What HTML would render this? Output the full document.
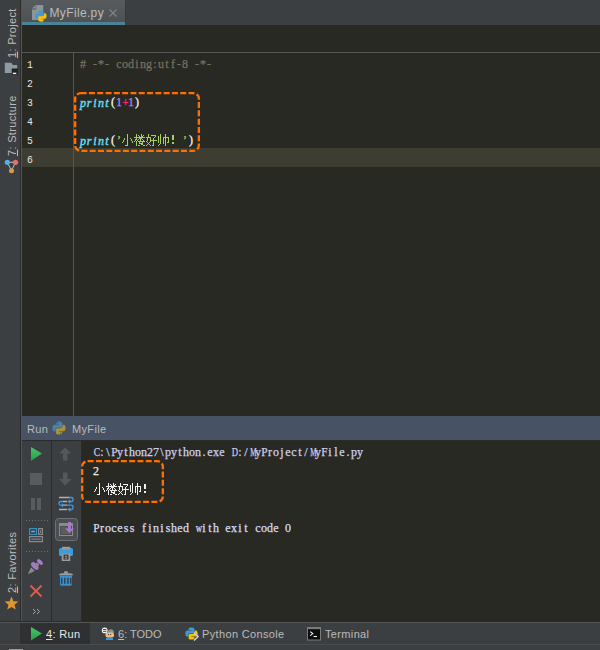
<!DOCTYPE html>
<html><head><meta charset="utf-8">
<style>
*{margin:0;padding:0;box-sizing:border-box}
html,body{width:600px;height:650px;overflow:hidden;background:#3c3f41}
body{position:relative;font-family:"Liberation Sans",sans-serif;}
.a{position:absolute}
.m{position:absolute;font-family:"Liberation Serif",serif;font-size:12px;white-space:pre;line-height:19px;-webkit-text-stroke-width:.25px}
.c{display:inline-block;width:6px;text-align:center;font-weight:inherit;height:19px;vertical-align:top}
.ln{position:absolute;font-family:"Liberation Mono",monospace;font-size:11.5px;white-space:pre;line-height:19px;color:#e8e8e2}
.ui{position:absolute;font-family:"Liberation Sans",sans-serif;font-size:11px;letter-spacing:.35px;white-space:pre;line-height:14px;color:#bbbbbb}
.vt{position:absolute;transform-origin:0 0;transform:rotate(-90deg);font-size:11px;letter-spacing:.32px;color:#bbbbbb;white-space:pre;line-height:14px}
u{text-decoration:underline;text-underline-offset:1px}
</style></head><body>

<div class="a" style="left:20px;top:0;width:1px;height:621px;background:#2b2b2b"></div>
<div class="a" style="left:21px;top:0;width:1px;height:621px;background:#555555"></div>
<div class="a" style="left:22px;top:0;width:103px;height:22px;background:linear-gradient(#575b5e,#4e5254)"></div>
<div class="a" style="left:125px;top:0;width:1px;height:25px;background:#37393b"></div>
<div class="a" style="left:22px;top:22px;width:103px;height:3px;background:#4a8396"></div>
<div class="a" style="left:22px;top:25px;width:578px;height:391px;background:#282923"></div>
<div class="a" style="left:22px;top:52px;width:578px;height:1px;background:#555555"></div>
<div class="a" style="left:22px;top:148px;width:578px;height:19px;background:#3e3d32"></div>
<div class="a" style="left:73px;top:53px;width:1px;height:363px;background:#555555"></div>
<div class="a" style="left:22px;top:416px;width:578px;height:24px;background:#475264"></div>
<div class="a" style="left:22px;top:440px;width:578px;height:1px;background:#2b2b2b"></div>
<div class="a" style="left:51px;top:441px;width:1px;height:180px;background:#2b2b2b"></div>
<div class="a" style="left:81px;top:441px;width:1px;height:180px;background:#2b2b2b"></div>
<div class="a" style="left:82px;top:441px;width:518px;height:180px;background:#282923"></div>
<div class="a" style="left:0;top:621px;width:600px;height:1px;background:#2b2b2b"></div>
<div class="a" style="left:0;top:622px;width:600px;height:1px;background:#555555"></div>
<div class="a" style="left:20px;top:623px;width:70px;height:21px;background:#2e3032"></div>
<div class="a" style="left:0;top:644px;width:600px;height:1px;background:#4a4a4a"></div>

<div class="ln" style="left:26.8px;top:55px;transform:scaleX(.85);transform-origin:0 0">1
2
3
4
5
6</div>
<div class="m" style="left:80px;top:55px"><span style="color:#75715e"><b class="c">#</b><b class="c"></b><b class="c">-</b><b class="c">*</b><b class="c">-</b><b class="c"></b><b class="c">c</b><b class="c">o</b><b class="c">d</b><b class="c">i</b><b class="c">n</b><b class="c">g</b><b class="c">:</b><b class="c">u</b><b class="c">t</b><b class="c">f</b><b class="c">-</b><b class="c">8</b><b class="c"></b><b class="c">-</b><b class="c">*</b><b class="c">-</b></span><br><br><span style="color:#66d9ef;font-style:italic;font-weight:normal;-webkit-text-stroke-width:.45px;position:relative;top:1px"><b class="c">p</b><b class="c">r</b><b class="c">i</b><b class="c">n</b><b class="c">t</b></span><span style="color:#f8f8f2"><b class="c">(</b></span><span style="color:#ae81ff"><b class="c">1</b></span><span style="color:#f92672;font-weight:bold"><b class="c" style="transform:scaleX(0.93)">+</b></span><span style="color:#ae81ff"><b class="c">1</b></span><span style="color:#f8f8f2"><b class="c">)</b></span><br><br><span style="color:#66d9ef;font-style:italic;font-weight:normal;-webkit-text-stroke-width:.45px;position:relative;top:1px"><b class="c">p</b><b class="c">r</b><b class="c">i</b><b class="c">n</b><b class="c">t</b></span><span style="color:#f8f8f2"><b class="c">(</b></span><span style="color:#a6d05e"><b class="c">’</b></span><b class="c"></b><b class="c"></b><b class="c"></b><b class="c"></b><b class="c"></b><b class="c"></b><b class="c"></b><b class="c"></b><b class="c"></b><b class="c"></b><span style="color:#a6d05e"><b class="c">’</b></span><span style="color:#f8f8f2"><b class="c">)</b></span></div>
<svg class="a" style="left:121px;top:134px" width="60" height="12" fill="#a6d05e" shape-rendering="crispEdges"><rect x="6" y="0" width="1" height="1"/><rect x="6" y="1" width="1" height="1"/><rect x="6" y="2" width="1" height="1"/><rect x="6" y="3" width="1" height="1"/><rect x="3" y="4" width="1" height="1"/><rect x="6" y="4" width="1" height="1"/><rect x="9" y="4" width="1" height="1"/><rect x="3" y="5" width="1" height="1"/><rect x="6" y="5" width="1" height="1"/><rect x="10" y="5" width="1" height="1"/><rect x="2" y="6" width="1" height="1"/><rect x="6" y="6" width="1" height="1"/><rect x="10" y="6" width="1" height="1"/><rect x="2" y="7" width="1" height="1"/><rect x="6" y="7" width="1" height="1"/><rect x="11" y="7" width="1" height="1"/><rect x="1" y="8" width="1" height="1"/><rect x="6" y="8" width="1" height="1"/><rect x="11" y="8" width="1" height="1"/><rect x="6" y="9" width="1" height="1"/><rect x="6" y="10" width="1" height="1"/><rect x="4" y="11" width="3" height="1"/><rect x="15" y="0" width="1" height="1"/><rect x="20" y="0" width="1" height="1"/><rect x="15" y="1" width="1" height="1"/><rect x="17" y="1" width="1" height="1"/><rect x="20" y="1" width="1" height="1"/><rect x="22" y="1" width="1" height="1"/><rect x="15" y="2" width="1" height="1"/><rect x="18" y="2" width="1" height="1"/><rect x="20" y="2" width="2" height="1"/><rect x="13" y="3" width="11" height="1"/><rect x="15" y="4" width="1" height="1"/><rect x="18" y="4" width="3" height="1"/><rect x="14" y="5" width="2" height="1"/><rect x="17" y="5" width="1" height="1"/><rect x="19" y="5" width="1" height="1"/><rect x="21" y="5" width="1" height="1"/><rect x="14" y="6" width="1" height="1"/><rect x="16" y="6" width="1" height="1"/><rect x="19" y="6" width="1" height="1"/><rect x="22" y="6" width="1" height="1"/><rect x="13" y="7" width="1" height="1"/><rect x="15" y="7" width="1" height="1"/><rect x="17" y="7" width="7" height="1"/><rect x="15" y="8" width="1" height="1"/><rect x="18" y="8" width="1" height="1"/><rect x="21" y="8" width="1" height="1"/><rect x="15" y="9" width="1" height="1"/><rect x="18" y="9" width="4" height="1"/><rect x="15" y="10" width="1" height="1"/><rect x="20" y="10" width="2" height="1"/><rect x="15" y="11" width="1" height="1"/><rect x="17" y="11" width="2" height="1"/><rect x="22" y="11" width="2" height="1"/><rect x="27" y="0" width="1" height="1"/><rect x="27" y="1" width="1" height="1"/><rect x="30" y="1" width="5" height="1"/><rect x="27" y="2" width="1" height="1"/><rect x="34" y="2" width="1" height="1"/><rect x="25" y="3" width="5" height="1"/><rect x="33" y="3" width="1" height="1"/><rect x="26" y="4" width="1" height="1"/><rect x="29" y="4" width="1" height="1"/><rect x="32" y="4" width="1" height="1"/><rect x="26" y="5" width="1" height="1"/><rect x="29" y="5" width="1" height="1"/><rect x="32" y="5" width="1" height="1"/><rect x="26" y="6" width="1" height="1"/><rect x="29" y="6" width="7" height="1"/><rect x="25" y="7" width="1" height="1"/><rect x="29" y="7" width="1" height="1"/><rect x="32" y="7" width="1" height="1"/><rect x="26" y="8" width="1" height="1"/><rect x="28" y="8" width="1" height="1"/><rect x="32" y="8" width="1" height="1"/><rect x="27" y="9" width="1" height="1"/><rect x="32" y="9" width="1" height="1"/><rect x="26" y="10" width="1" height="1"/><rect x="28" y="10" width="1" height="1"/><rect x="32" y="10" width="1" height="1"/><rect x="25" y="11" width="1" height="1"/><rect x="29" y="11" width="1" height="1"/><rect x="31" y="11" width="2" height="1"/><rect x="39" y="0" width="1" height="1"/><rect x="44" y="0" width="1" height="1"/><rect x="39" y="1" width="1" height="1"/><rect x="44" y="1" width="1" height="1"/><rect x="37" y="2" width="1" height="1"/><rect x="39" y="2" width="1" height="1"/><rect x="44" y="2" width="1" height="1"/><rect x="37" y="3" width="1" height="1"/><rect x="39" y="3" width="1" height="1"/><rect x="42" y="3" width="6" height="1"/><rect x="37" y="4" width="1" height="1"/><rect x="39" y="4" width="1" height="1"/><rect x="42" y="4" width="1" height="1"/><rect x="44" y="4" width="1" height="1"/><rect x="47" y="4" width="1" height="1"/><rect x="37" y="5" width="1" height="1"/><rect x="39" y="5" width="1" height="1"/><rect x="42" y="5" width="1" height="1"/><rect x="44" y="5" width="1" height="1"/><rect x="47" y="5" width="1" height="1"/><rect x="37" y="6" width="1" height="1"/><rect x="39" y="6" width="1" height="1"/><rect x="42" y="6" width="1" height="1"/><rect x="44" y="6" width="1" height="1"/><rect x="47" y="6" width="1" height="1"/><rect x="37" y="7" width="1" height="1"/><rect x="39" y="7" width="1" height="1"/><rect x="42" y="7" width="1" height="1"/><rect x="44" y="7" width="1" height="1"/><rect x="47" y="7" width="1" height="1"/><rect x="37" y="8" width="1" height="1"/><rect x="39" y="8" width="1" height="1"/><rect x="42" y="8" width="1" height="1"/><rect x="44" y="8" width="1" height="1"/><rect x="46" y="8" width="2" height="1"/><rect x="39" y="9" width="1" height="1"/><rect x="42" y="9" width="1" height="1"/><rect x="44" y="9" width="1" height="1"/><rect x="38" y="10" width="1" height="1"/><rect x="44" y="10" width="1" height="1"/><rect x="37" y="11" width="1" height="1"/><rect x="44" y="11" width="1" height="1"/><rect x="51" y="1" width="2" height="1"/><rect x="51" y="2" width="2" height="1"/><rect x="51" y="3" width="2" height="1"/><rect x="51" y="4" width="2" height="1"/><rect x="51" y="5" width="2" height="1"/><rect x="51" y="8" width="2" height="1"/><rect x="51" y="9" width="2" height="1"/></svg>
<svg class="a" style="left:71px;top:89px" width="132" height="66"><rect x="4.15" y="4.15" width="123.7" height="57.7" rx="5.5" ry="5.5" fill="none" stroke="#ff7000" stroke-width="2.3" stroke-dasharray="6 2.3"/></svg>
<div class="m" style="left:93px;top:443px"><span style="color:#d0d0e8"><b class="c" style="transform:scaleX(0.79)">C</b><b class="c">:</b><b class="c">\</b><b class="c" style="transform:scaleX(0.94)">P</b><b class="c">y</b><b class="c">t</b><b class="c">h</b><b class="c">o</b><b class="c">n</b><b class="c">2</b><b class="c">7</b><b class="c">\</b><b class="c">p</b><b class="c">y</b><b class="c">t</b><b class="c">h</b><b class="c">o</b><b class="c">n</b><b class="c">.</b><b class="c">e</b><b class="c">x</b><b class="c">e</b><b class="c"></b><b class="c" style="transform:scaleX(0.73)">D</b><b class="c">:</b><b class="c">/</b><b class="c" style="transform:scaleX(0.59)">M</b><b class="c">y</b><b class="c" style="transform:scaleX(0.94)">P</b><b class="c">r</b><b class="c">o</b><b class="c">j</b><b class="c">e</b><b class="c">c</b><b class="c">t</b><b class="c">/</b><b class="c" style="transform:scaleX(0.59)">M</b><b class="c">y</b><b class="c" style="transform:scaleX(0.94)">F</b><b class="c">i</b><b class="c">l</b><b class="c">e</b><b class="c">.</b><b class="c">p</b><b class="c">y</b></span><br><span style="color:#e8e8e8"><b class="c">2</b></span><br><br><br><span style="color:#dcdcf0"><b class="c" style="transform:scaleX(0.94)">P</b><b class="c">r</b><b class="c">o</b><b class="c">c</b><b class="c">e</b><b class="c">s</b><b class="c">s</b><b class="c"></b><b class="c">f</b><b class="c">i</b><b class="c">n</b><b class="c">i</b><b class="c">s</b><b class="c">h</b><b class="c">e</b><b class="c">d</b><b class="c"></b><b class="c" style="transform:scaleX(0.73)">w</b><b class="c">i</b><b class="c">t</b><b class="c">h</b><b class="c"></b><b class="c">e</b><b class="c">x</b><b class="c">i</b><b class="c">t</b><b class="c"></b><b class="c">c</b><b class="c">o</b><b class="c">d</b><b class="c">e</b><b class="c"></b><b class="c">0</b></span></div>
<svg class="a" style="left:93px;top:483px" width="60" height="12" fill="#f0f0f0" shape-rendering="crispEdges"><rect x="6" y="0" width="1" height="1"/><rect x="6" y="1" width="1" height="1"/><rect x="6" y="2" width="1" height="1"/><rect x="6" y="3" width="1" height="1"/><rect x="3" y="4" width="1" height="1"/><rect x="6" y="4" width="1" height="1"/><rect x="9" y="4" width="1" height="1"/><rect x="3" y="5" width="1" height="1"/><rect x="6" y="5" width="1" height="1"/><rect x="10" y="5" width="1" height="1"/><rect x="2" y="6" width="1" height="1"/><rect x="6" y="6" width="1" height="1"/><rect x="10" y="6" width="1" height="1"/><rect x="2" y="7" width="1" height="1"/><rect x="6" y="7" width="1" height="1"/><rect x="11" y="7" width="1" height="1"/><rect x="1" y="8" width="1" height="1"/><rect x="6" y="8" width="1" height="1"/><rect x="11" y="8" width="1" height="1"/><rect x="6" y="9" width="1" height="1"/><rect x="6" y="10" width="1" height="1"/><rect x="4" y="11" width="3" height="1"/><rect x="15" y="0" width="1" height="1"/><rect x="20" y="0" width="1" height="1"/><rect x="15" y="1" width="1" height="1"/><rect x="17" y="1" width="1" height="1"/><rect x="20" y="1" width="1" height="1"/><rect x="22" y="1" width="1" height="1"/><rect x="15" y="2" width="1" height="1"/><rect x="18" y="2" width="1" height="1"/><rect x="20" y="2" width="2" height="1"/><rect x="13" y="3" width="11" height="1"/><rect x="15" y="4" width="1" height="1"/><rect x="18" y="4" width="3" height="1"/><rect x="14" y="5" width="2" height="1"/><rect x="17" y="5" width="1" height="1"/><rect x="19" y="5" width="1" height="1"/><rect x="21" y="5" width="1" height="1"/><rect x="14" y="6" width="1" height="1"/><rect x="16" y="6" width="1" height="1"/><rect x="19" y="6" width="1" height="1"/><rect x="22" y="6" width="1" height="1"/><rect x="13" y="7" width="1" height="1"/><rect x="15" y="7" width="1" height="1"/><rect x="17" y="7" width="7" height="1"/><rect x="15" y="8" width="1" height="1"/><rect x="18" y="8" width="1" height="1"/><rect x="21" y="8" width="1" height="1"/><rect x="15" y="9" width="1" height="1"/><rect x="18" y="9" width="4" height="1"/><rect x="15" y="10" width="1" height="1"/><rect x="20" y="10" width="2" height="1"/><rect x="15" y="11" width="1" height="1"/><rect x="17" y="11" width="2" height="1"/><rect x="22" y="11" width="2" height="1"/><rect x="27" y="0" width="1" height="1"/><rect x="27" y="1" width="1" height="1"/><rect x="30" y="1" width="5" height="1"/><rect x="27" y="2" width="1" height="1"/><rect x="34" y="2" width="1" height="1"/><rect x="25" y="3" width="5" height="1"/><rect x="33" y="3" width="1" height="1"/><rect x="26" y="4" width="1" height="1"/><rect x="29" y="4" width="1" height="1"/><rect x="32" y="4" width="1" height="1"/><rect x="26" y="5" width="1" height="1"/><rect x="29" y="5" width="1" height="1"/><rect x="32" y="5" width="1" height="1"/><rect x="26" y="6" width="1" height="1"/><rect x="29" y="6" width="7" height="1"/><rect x="25" y="7" width="1" height="1"/><rect x="29" y="7" width="1" height="1"/><rect x="32" y="7" width="1" height="1"/><rect x="26" y="8" width="1" height="1"/><rect x="28" y="8" width="1" height="1"/><rect x="32" y="8" width="1" height="1"/><rect x="27" y="9" width="1" height="1"/><rect x="32" y="9" width="1" height="1"/><rect x="26" y="10" width="1" height="1"/><rect x="28" y="10" width="1" height="1"/><rect x="32" y="10" width="1" height="1"/><rect x="25" y="11" width="1" height="1"/><rect x="29" y="11" width="1" height="1"/><rect x="31" y="11" width="2" height="1"/><rect x="39" y="0" width="1" height="1"/><rect x="44" y="0" width="1" height="1"/><rect x="39" y="1" width="1" height="1"/><rect x="44" y="1" width="1" height="1"/><rect x="37" y="2" width="1" height="1"/><rect x="39" y="2" width="1" height="1"/><rect x="44" y="2" width="1" height="1"/><rect x="37" y="3" width="1" height="1"/><rect x="39" y="3" width="1" height="1"/><rect x="42" y="3" width="6" height="1"/><rect x="37" y="4" width="1" height="1"/><rect x="39" y="4" width="1" height="1"/><rect x="42" y="4" width="1" height="1"/><rect x="44" y="4" width="1" height="1"/><rect x="47" y="4" width="1" height="1"/><rect x="37" y="5" width="1" height="1"/><rect x="39" y="5" width="1" height="1"/><rect x="42" y="5" width="1" height="1"/><rect x="44" y="5" width="1" height="1"/><rect x="47" y="5" width="1" height="1"/><rect x="37" y="6" width="1" height="1"/><rect x="39" y="6" width="1" height="1"/><rect x="42" y="6" width="1" height="1"/><rect x="44" y="6" width="1" height="1"/><rect x="47" y="6" width="1" height="1"/><rect x="37" y="7" width="1" height="1"/><rect x="39" y="7" width="1" height="1"/><rect x="42" y="7" width="1" height="1"/><rect x="44" y="7" width="1" height="1"/><rect x="47" y="7" width="1" height="1"/><rect x="37" y="8" width="1" height="1"/><rect x="39" y="8" width="1" height="1"/><rect x="42" y="8" width="1" height="1"/><rect x="44" y="8" width="1" height="1"/><rect x="46" y="8" width="2" height="1"/><rect x="39" y="9" width="1" height="1"/><rect x="42" y="9" width="1" height="1"/><rect x="44" y="9" width="1" height="1"/><rect x="38" y="10" width="1" height="1"/><rect x="44" y="10" width="1" height="1"/><rect x="37" y="11" width="1" height="1"/><rect x="44" y="11" width="1" height="1"/><rect x="51" y="1" width="2" height="1"/><rect x="51" y="2" width="2" height="1"/><rect x="51" y="3" width="2" height="1"/><rect x="51" y="4" width="2" height="1"/><rect x="51" y="5" width="2" height="1"/><rect x="51" y="8" width="2" height="1"/><rect x="51" y="9" width="2" height="1"/></svg>
<svg class="a" style="left:78px;top:457px" width="89" height="49"><rect x="4.15" y="4.15" width="80.7" height="40.7" rx="5.5" ry="5.5" fill="none" stroke="#ff7000" stroke-width="2.3" stroke-dasharray="6 2.3"/></svg>
<div class="vt" style="left:5px;top:58px"><u>1</u>: Project</div>
<div class="vt" style="left:5px;top:156px"><u>7</u>: Structure</div>
<div class="vt" style="left:5px;top:593px"><u>2</u>: Favorites</div>
<svg class="a" style="left:4px;top:62px" width="16" height="16"><path d="M0.8,0.8 H7.3 L8.8,3 H13.2 V11 H0.8 Z" fill="#8c9aa2"/><rect x="7.7" y="6.5" width="6.2" height="6.2" fill="#222222"/><rect x="8.8" y="10.7" width="3.5" height="1.4" fill="#f0f0f0"/></svg>
<svg class="a" style="left:2px;top:156px" width="20" height="20"><path d="M5.3,6.3 H13.5 M5.3,6.3 L9.5,14.7 L13.5,6.3" stroke="#c0c0c0" stroke-width="1" fill="none"/><circle cx="5.3" cy="6.3" r="2.6" fill="#58ace6"/><circle cx="13.5" cy="6.3" r="2.6" fill="#e6706a"/><circle cx="9.5" cy="14.7" r="2.5" fill="#d8994a"/></svg>
<svg class="a" style="left:4px;top:596px" width="15" height="15" viewBox="0 0 15 15"><path d="M7.5,0.5 L9.4,5.2 L14.4,5.5 L10.5,8.7 L11.8,13.6 L7.5,10.9 L3.2,13.6 L4.5,8.7 L0.6,5.5 L5.6,5.2 Z" fill="#de962f"/></svg>
<svg class="a" style="left:31px;top:4px" width="14" height="18"><path d="M5.2,1 H12.2 V16 H1 V5.4 H5.2 Z" fill="#8c959b"/><path d="M1,4.6 L4.6,1 V4.6 Z" fill="#8c959b"/></svg>
<svg class="a" style="left:35px;top:10px" width="12" height="12" viewBox="0 0 16 16"><path d="M7.9,0.5 C4.2,0.5 4.5,2.1 4.5,2.1 V3.8 H8 V4.3 H3 C3,4.3 0.5,4 0.5,8 C0.5,11.9 2.6,11.8 2.6,11.8 H4 V9.9 C4,9.9 3.9,7.8 6.1,7.8 H9.6 C9.6,7.8 11.6,7.8 11.6,5.9 V2.6 C11.6,2.6 11.9,0.5 7.9,0.5 Z" fill="#3c9ad6"/><path d="M8.1,15.5 C11.8,15.5 11.5,13.9 11.5,13.9 V12.2 H8 V11.7 H13 C13,11.7 15.5,12 15.5,8 C15.5,4.1 13.4,4.2 13.4,4.2 H12 V6.1 C12,6.1 12.1,8.2 9.9,8.2 H6.4 C6.4,8.2 4.4,8.2 4.4,10.1 V13.4 C4.4,13.4 4.1,15.5 8.1,15.5 Z" fill="#f5c400"/></svg>
<div class="ui" style="left:49.5px;top:6px;font-size:12px;letter-spacing:.35px;line-height:14px;color:#bbbbbb">MyFile.py</div>
<svg class="a" style="left:109px;top:9px" width="8" height="8"><path d="M0.5,0.5 L7.5,7.5 M7.5,0.5 L0.5,7.5" stroke="#80858a" stroke-width="1.1"/></svg>
<div class="ui" style="left:27px;top:422px;;color:#bbbbbb">Run</div>
<svg class="a" style="left:52px;top:421px" width="14" height="14" viewBox="0 0 16 16"><path d="M7.9,0.5 C4.2,0.5 4.5,2.1 4.5,2.1 V3.8 H8 V4.3 H3 C3,4.3 0.5,4 0.5,8 C0.5,11.9 2.6,11.8 2.6,11.8 H4 V9.9 C4,9.9 3.9,7.8 6.1,7.8 H9.6 C9.6,7.8 11.6,7.8 11.6,5.9 V2.6 C11.6,2.6 11.9,0.5 7.9,0.5 Z" fill="#4a82a8"/><path d="M8.1,15.5 C11.8,15.5 11.5,13.9 11.5,13.9 V12.2 H8 V11.7 H13 C13,11.7 15.5,12 15.5,8 C15.5,4.1 13.4,4.2 13.4,4.2 H12 V6.1 C12,6.1 12.1,8.2 9.9,8.2 H6.4 C6.4,8.2 4.4,8.2 4.4,10.1 V13.4 C4.4,13.4 4.1,15.5 8.1,15.5 Z" fill="#a8903c"/><circle cx="6" cy="1.9" r="0.7" fill="#38404e"/><circle cx="10" cy="14.1" r="0.7" fill="#38404e"/></svg>
<div class="ui" style="left:72px;top:422px;;color:#bbbbbb">MyFile</div>
<svg class="a" style="left:30px;top:446px" width="13" height="16"><defs><linearGradient id="g1" x1="0" y1="0" x2="0" y2="1"><stop offset="0" stop-color="#4cc46a"/><stop offset="1" stop-color="#22a043"/></linearGradient></defs><path d="M1,1 L12,7.5 L1,15 Z" fill="url(#g1)"/></svg>
<div class="a" style="left:30px;top:473px;width:12px;height:12px;background:#5a5b5c"></div>
<div class="a" style="left:31px;top:498px;width:4px;height:12px;background:#5a5b5c"></div>
<div class="a" style="left:37px;top:498px;width:4px;height:12px;background:#5a5b5c"></div>
<div class="a" style="left:26px;top:520px;width:23px;height:1px;background:repeating-linear-gradient(90deg,#707070 0 1px,transparent 1px 3px)"></div>
<svg class="a" style="left:28px;top:527px" width="16" height="16"><rect x="1" y="1" width="8" height="7" fill="#3592c4"/><rect x="2.2" y="2.2" width="5.6" height="4.6" fill="#2e3a44"/><rect x="3.2" y="3.7" width="3.6" height="1.6" fill="#7fa8c4"/><rect x="10" y="1" width="5" height="7" fill="#8a8a8a"/><rect x="11.2" y="2.2" width="2.6" height="4.6" fill="#3c3f41"/><rect x="12" y="3.3" width="1" height="2.5" fill="#8a8a8a"/><rect x="1" y="9" width="14" height="6.2" fill="#8a8a8a"/><rect x="2.2" y="10.2" width="11.6" height="3.8" fill="#3c3f41"/><rect x="3.2" y="11.6" width="9.6" height="1.1" fill="#8a8a8a"/></svg>
<div class="a" style="left:26px;top:551px;width:23px;height:1px;background:repeating-linear-gradient(90deg,#707070 0 1px,transparent 1px 3px)"></div>
<svg class="a" style="left:24px;top:554px" width="24" height="24"><path d="M7,13.2 L10.8,17 L3.8,20.2 Z" fill="#8a8a8a"/><ellipse cx="10.8" cy="12" rx="4.6" ry="2.5" transform="rotate(45 10.8 12)" fill="#a27ac9"/><circle cx="12.9" cy="10.8" r="2.1" fill="#8a8a8a"/><ellipse cx="16" cy="8" rx="3.5" ry="1.9" transform="rotate(45 16 8)" fill="#a77ccf"/></svg>
<svg class="a" style="left:29px;top:584px" width="14" height="14"><path d="M1.5,1.5 L12.5,12.5 M12.5,1.5 L1.5,12.5" stroke="#dc5e4e" stroke-width="1.8"/></svg>
<svg class="a" style="left:32px;top:608px" width="9" height="7"><path d="M1,1 L3.5,3.5 L1,6 M5,1 L7.5,3.5 L5,6" stroke="#a8a8a8" stroke-width="1" fill="none"/></svg>
<svg class="a" style="left:59px;top:447px" width="14" height="14"><path d="M6,0.5 L12.5,6.5 H8.5 V13.5 H4 V6.5 H0 Z" fill="#555759"/></svg>
<svg class="a" style="left:59px;top:472px" width="14" height="14"><path d="M4,0.5 H8.5 V7 H12.5 L6.2,13.5 L0,7 H4 Z" fill="#555759"/></svg>
<svg class="a" style="left:57px;top:495px" width="18" height="18"><path d="M2,2.5 H12 M6,6.5 H10 M6,10.2 H10 M2,14.5 H10" stroke="#b0b0b0" stroke-width="1.3"/><path d="M12,2.5 H14.5 Q16,2.5 16,4 V5 Q16,6.5 14.5,6.5 H12.5 M6,6.5 H3.5 Q2,6.5 2,8 V8.7 Q2,10.2 3.5,10.2 H5.5 M10,10.2 H14.5 Q16,10.2 16,11.7 V13 Q16,14.5 14.5,14.5 H12.5" stroke="#3d9be0" stroke-width="1.3" fill="none"/><path d="M10.3,6.5 L13.2,4.3 V8.7 Z M7.7,10.2 L4.8,8 V12.4 Z M10.3,14.5 L13.2,12.3 V16.7 Z" fill="#3d9be0"/></svg>
<div class="a" style="left:55px;top:518px;width:23px;height:23px;border:1px solid #6e7173;border-radius:3.5px;background:#4c4f51"></div>
<svg class="a" style="left:58px;top:521px" width="17" height="17"><rect x="1.5" y="2.5" width="13" height="12" fill="none" stroke="#8a8a8a"/><rect x="2" y="3" width="12" height="2" fill="#8a8a8a"/><rect x="3" y="6" width="10" height="7" fill="#5a5d5f"/><path d="M10,1 H13 V7.5 H16 L11.5,12 L7,7.5 H10 Z" fill="#a77ad0"/></svg>
<svg class="a" style="left:55px;top:544px" width="22" height="20"><rect x="4" y="4" width="14" height="8" rx="1.6" fill="#3d9be0"/><rect x="7" y="2.8" width="8.2" height="2.6" fill="#9c9c9c"/><rect x="6.7" y="9.5" width="8.5" height="7.5" fill="#9c9c9c"/><rect x="8.5" y="10.6" width="5" height="5" fill="#3c3f41"/><rect x="10" y="11.8" width="2" height="1" fill="#9c9c9c"/><rect x="10" y="13.7" width="2" height="1" fill="#9c9c9c"/></svg>
<svg class="a" style="left:55px;top:568px" width="22" height="20"><rect x="9" y="3.3" width="4" height="2.4" rx="1.2" fill="#9c9c9c"/><path d="M4,7.2 Q4,5.2 7,5.2 H15 Q18,5.2 18,7.2 Z" fill="#9c9c9c"/><path d="M5,7.6 H17 V16 Q17,17.7 15.3,17.7 H6.7 Q5,17.7 5,16 Z" fill="#3d8fc8"/><rect x="6.1" y="9.8" width="1.3" height="6" fill="#2b3945"/><rect x="9.2" y="9.8" width="1.3" height="6" fill="#2b3945"/><rect x="12.3" y="9.8" width="1.3" height="6" fill="#2b3945"/><rect x="15.1" y="9.8" width="1.3" height="6" fill="#2b3945"/></svg>
<svg class="a" style="left:30px;top:626px" width="13" height="16"><path d="M1,1 L12,7.5 L1,14.5 Z" fill="url(#g1)"/></svg>
<div class="ui" style="left:46px;top:627px;color:#e8e8e8"><u>4</u>: Run</div>
<svg class="a" style="left:99px;top:624px" width="18" height="18"><path d="M8.7,9 Q8.7,5.2 11.9,5.2 Q15,5.2 15,9 Z" fill="#8f8f8f"/><path d="M6.5,10.5 Q6.5,8.4 8.7,8.4 H12.8 Q15,8.4 15,10.5 V11.5 Q15,13.6 12.8,13.6 H8.7 Q6.5,13.6 6.5,11.5 Z" fill="#f3bd7e"/><circle cx="9.5" cy="10.6" r="0.6" fill="#333"/><circle cx="11.6" cy="10.6" r="0.6" fill="#333"/><path d="M7,16 V14.5 Q7,13.5 8,13.5 H13 Q14,13.5 14,14.5 V16 Z" fill="#3a9bdc"/><ellipse cx="5.7" cy="6.4" rx="2.9" ry="2.9" fill="#f4f4f4"/><path d="M4,5.5 H7.4 M4,7.3 H7.4" stroke="#333" stroke-width="0.9"/></svg>
<div class="ui" style="left:118px;top:627px;letter-spacing:0"><u>6</u>: TODO</div>
<svg class="a" style="left:185px;top:627px" width="13" height="13" viewBox="0 0 16 16"><path d="M7.9,0.5 C4.2,0.5 4.5,2.1 4.5,2.1 V3.8 H8 V4.3 H3 C3,4.3 0.5,4 0.5,8 C0.5,11.9 2.6,11.8 2.6,11.8 H4 V9.9 C4,9.9 3.9,7.8 6.1,7.8 H9.6 C9.6,7.8 11.6,7.8 11.6,5.9 V2.6 C11.6,2.6 11.9,0.5 7.9,0.5 Z" fill="#3c9ad6"/><path d="M8.1,15.5 C11.8,15.5 11.5,13.9 11.5,13.9 V12.2 H8 V11.7 H13 C13,11.7 15.5,12 15.5,8 C15.5,4.1 13.4,4.2 13.4,4.2 H12 V6.1 C12,6.1 12.1,8.2 9.9,8.2 H6.4 C6.4,8.2 4.4,8.2 4.4,10.1 V13.4 C4.4,13.4 4.1,15.5 8.1,15.5 Z" fill="#f5c400"/></svg>
<svg class="a" style="left:189.5px;top:630.5px" width="10" height="11"><path d="M4,1.5 L8,5.5 L4,9.5" stroke="#c8ccd6" stroke-width="1.7" fill="none"/></svg>
<div class="ui" style="left:202px;top:627px">Python Console</div>
<svg class="a" style="left:307px;top:627px" width="15" height="14"><rect x="0.5" y="0.5" width="13" height="12.5" fill="#0c0c0c" stroke="#7a7a7a"/><rect x="1" y="1" width="12" height="1.2" fill="#7a7a7a"/><path d="M3.2,4.6 L5.8,6.6 L3.2,8.6" stroke="#f0f0f0" fill="none" stroke-width="1.1"/><path d="M6.5,9.5 H10" stroke="#f0f0f0" stroke-width="1.1"/></svg>
<div class="ui" style="left:325px;top:627px">Terminal</div>
<div class="a" style="left:9px;top:649px;width:14px;height:1px;background:#9a9a9a"></div>
</body></html>
